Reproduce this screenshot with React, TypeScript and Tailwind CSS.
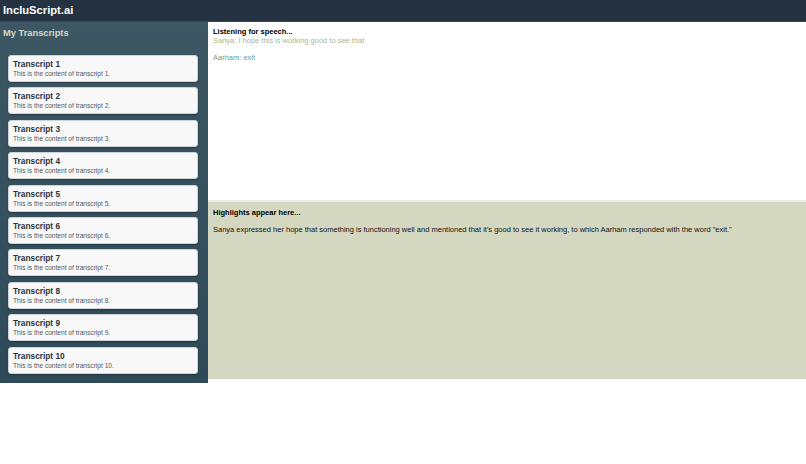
import React from "react";

const items = Array.from({ length: 10 }, (_, i) => i + 1);

export default function App() {
  return (
    <div className="w-[806px] bg-white" style={{ fontFamily: '"Liberation Sans", Arial, sans-serif' }}>
      <header className="h-[22px] bg-[#243241] border-b border-[#3b4858] flex items-center px-[3px]">
        <h1 className="text-[11.2px] font-bold text-white leading-none">IncluScript.ai</h1>
      </header>
      <div className="flex items-start">
        <aside className="w-[208px] bg-gradient-to-b from-[#3d5764] to-[#2e4a58] pt-[5px] pb-[9px]">
          <h2 className="px-[3px] text-[9.3px] font-bold text-[#d5dbc6] leading-[12px]">My Transcripts</h2>
          <ul className="mt-[16px] ml-[8px] mr-[10px] flex flex-col gap-[5.4px]">
            {items.map((n) => (
              <li
                key={n}
                className="h-[27px] bg-[#f8f8f8] border border-[#cfd3d6] rounded-[3px] shadow-[0_1px_2px_rgba(0,0,0,0.3)] px-[4px] pt-[3px]"
              >
                <div className="text-[8.3px] font-bold text-[#2e3338] leading-[11px]">Transcript {n}</div>
                <div className="text-[6.6px] text-[#555a5e] leading-[8px]">This is the content of transcript {n}.</div>
              </li>
            ))}
          </ul>
        </aside>
        <main className="flex-1 flex flex-col">
          <section className="h-[180px] border-b-[2px] border-[#ececec] px-[5px] pt-[5px]">
            <div className="text-[7.5px] font-bold text-black leading-[9px]">Listening for speech...</div>
            <div className="text-[7.5px] text-[#aab596] leading-[9px]">Sanya: I hope this is working good to see that</div>
            <div className="h-[8px]" />
            <div className="text-[7.5px] text-[#6d9c8e] leading-[9px]">Aarham: exit</div>
          </section>
          <section className="h-[177px] bg-[#d5d8c1] px-[5px] pt-[6px]">
            <div className="text-[7.5px] font-bold text-black leading-[9px]">Highlights appear here...</div>
            <div className="h-[8px]" />
            <div className="text-[7.5px] text-[#111] leading-[9px]">
              Sanya expressed her hope that something is functioning well and mentioned that it's good to see it working, to which Aarham responded with the word "exit."
            </div>
          </section>
        </main>
      </div>
      <div className="h-[81px]" />
    </div>
  );
}
